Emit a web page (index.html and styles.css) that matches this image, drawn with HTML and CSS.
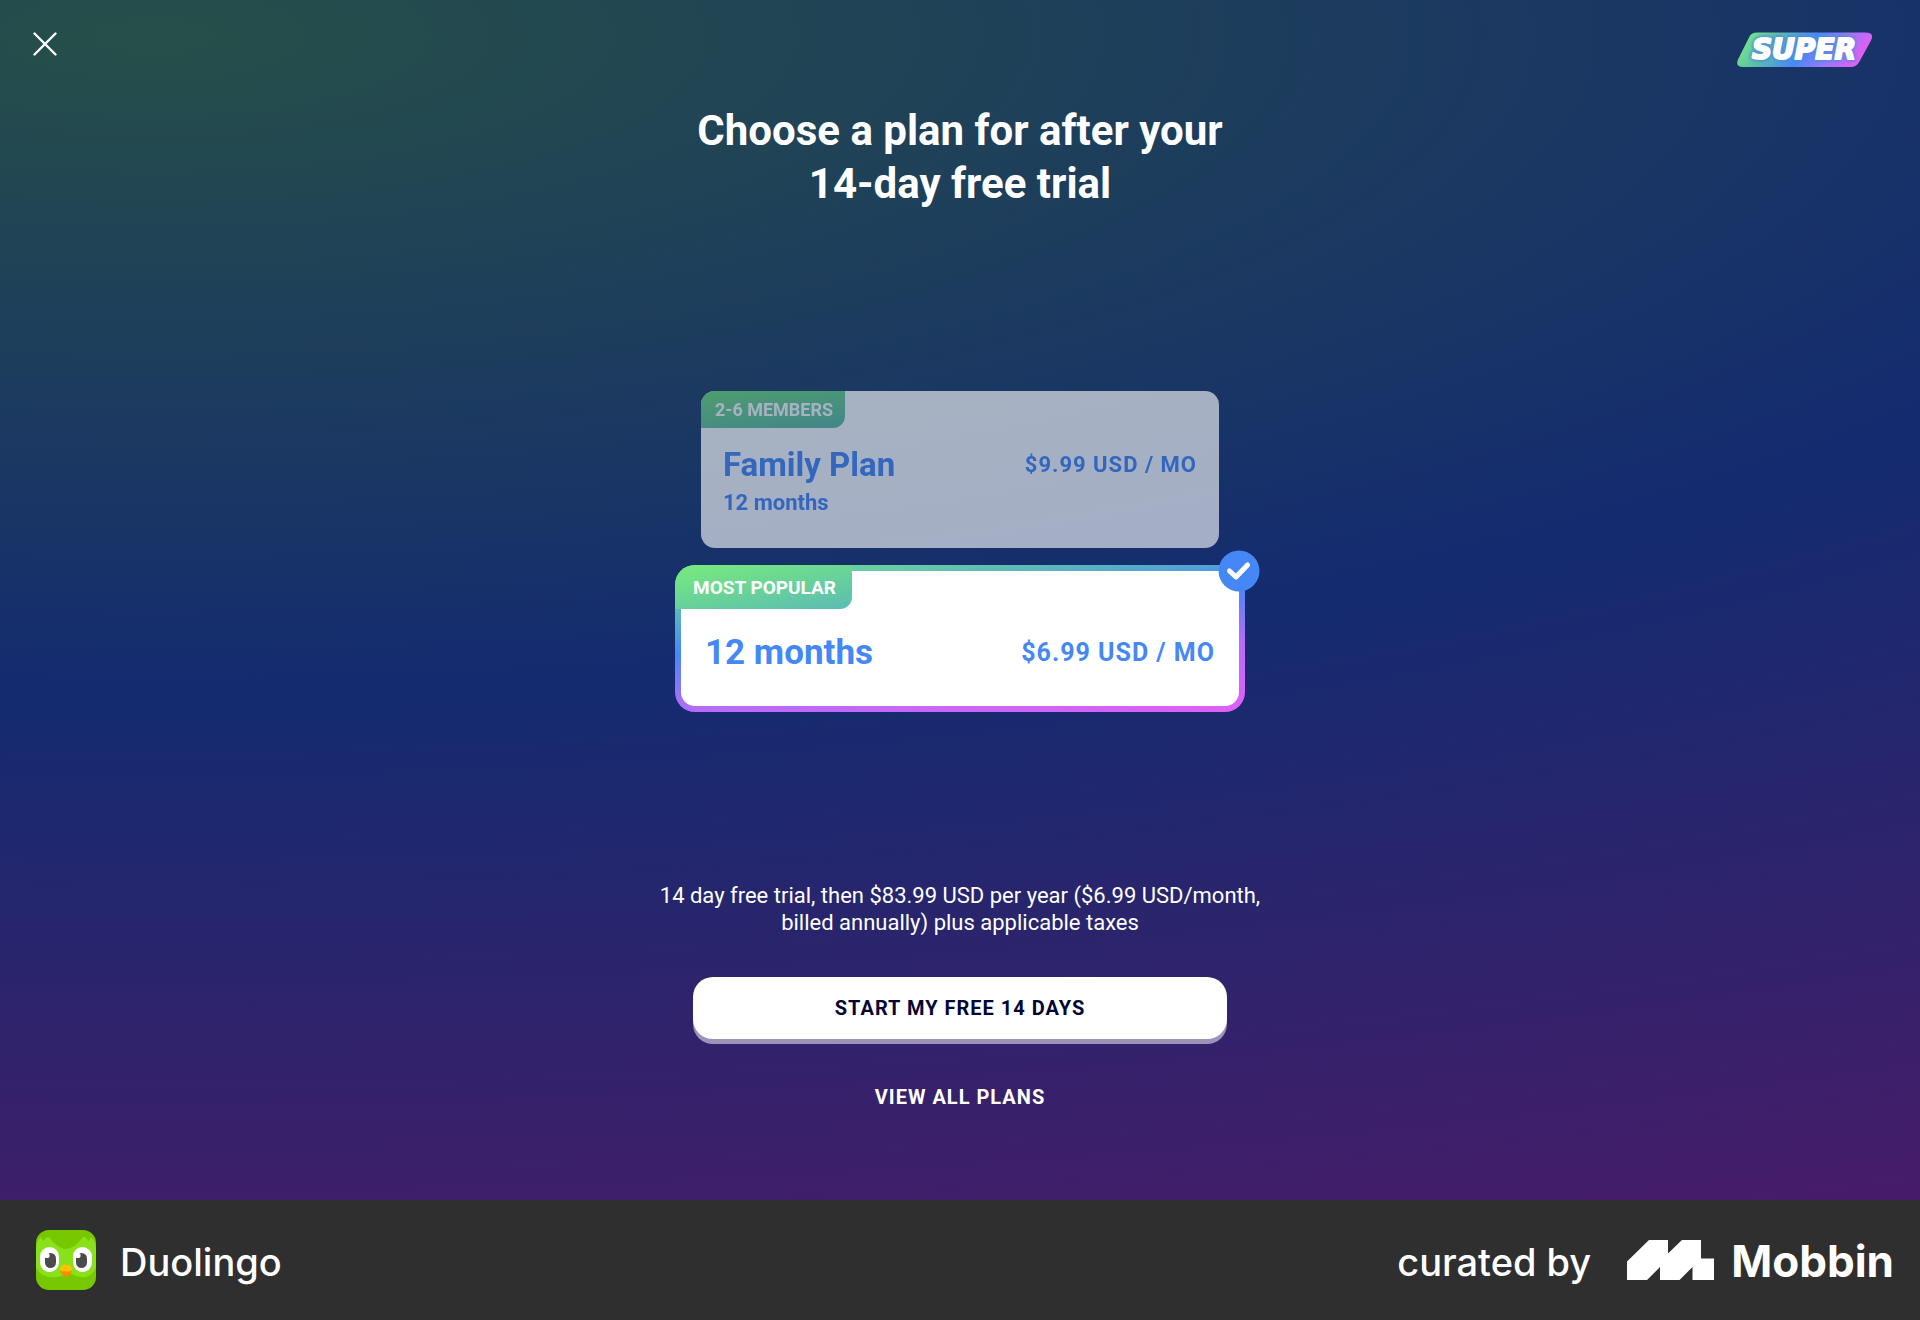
FILE: index.html
```html
<!DOCTYPE html>
<html lang="en">
<head>
<meta charset="utf-8">
<meta name="viewport" content="width=device-width, initial-scale=1">
<title>Super Duolingo – Choose a plan</title>
<link rel="stylesheet" href="styles.css">
</head>
<body>
<form class="screen">
  <header class="topbar">
    <button class="close" type="button" aria-label="Close">
      <svg width="24" height="24" viewBox="0 0 24 24" fill="none" stroke="#fff" stroke-width="2.4" stroke-linecap="round"><path d="M1.5 1.5l21 21M22.500 1.500l-21 21"/></svg>
    </button>
    <svg class="super" width="136" height="36" viewBox="0 0 136 36" role="img" aria-label="Super">
      <defs>
        <linearGradient id="superFill" x1="0" y1="0.4" x2="1" y2="0.6">
          <stop offset="0.05" stop-color="#70dd90"/>
          <stop offset="0.2" stop-color="#60c4a0"/>
          <stop offset="0.5" stop-color="#4788f8"/>
          <stop offset="0.72" stop-color="#9a78fa"/>
          <stop offset="0.92" stop-color="#dd60f5"/>
        </linearGradient>
        <filter id="superGlow" x="-10%" y="-30%" width="120%" height="160%"><feGaussianBlur stdDeviation="1.200"/></filter>
      </defs>
      <path fill="url(#superFill)" d="M20 0.500h108q10 0 6 8l-11.500 21q-3 5.500-9 5.500H6q-8 0-5-7.500L12.500 4.500Q14.500 0.500 20 0.500z"/>
      <text class="super-halo" x="67" y="27" text-anchor="middle" filter="url(#superGlow)" aria-hidden="true">SUPER</text>
      <text class="super-word" x="67" y="27" text-anchor="middle">SUPER</text>
    </svg>
  </header>

  <h1 class="title">Choose a plan for after your<br>14-day free trial</h1>

  <div class="plans" role="radiogroup" aria-label="Plans">
    <label class="plan plan-family">
      <input class="plan-radio" type="radio" name="plan" value="family">
      <span class="tag">2-6 MEMBERS</span>
      <span class="plan-row">
        <span class="plan-name">Family Plan</span>
        <span class="plan-price">$9.99 USD / MO</span>
      </span>
      <span class="plan-term">12 months</span>
    </label>
    <label class="plan plan-single">
      <input class="plan-radio" type="radio" name="plan" value="single" checked>
      <span class="tag">MOST POPULAR</span>
      <span class="plan-row">
        <span class="plan-name">12 months</span>
        <span class="plan-price">$6.99 USD / MO</span>
      </span>
      <svg class="check" width="42" height="42" viewBox="0 0 42 42" aria-hidden="true"><circle cx="21" cy="21" r="20.500" fill="#4588f5"/><path d="M11.500 21l6.500 6 11.500-12" fill="none" stroke="#fff" stroke-width="5" stroke-linecap="round" stroke-linejoin="round"/></svg>
    </label>
  </div>

  <div class="actions">
    <p class="terms">14 day free trial, then $83.99 USD per year ($6.99 USD/month,<br>billed annually) plus applicable taxes</p>
    <button class="start" type="submit">START MY FREE 14 DAYS</button>
    <button class="view-all" type="button">VIEW ALL PLANS</button>
  </div>
</form>

<footer class="credit">
  <div class="app">
    <svg width="60" height="60" viewBox="0 0 60 60" aria-hidden="true">
      <rect width="60" height="60" rx="13" fill="#78c800"/>
      <path fill="#89e219" d="M0 21Q0 13 3 9q1-3 3 0l1 2 3-3q2-2 4 0 8 9 16 11 8-2 16-11 2-2 4 0l3 3 1-2q2-3 3 0 3 4 3 12v16q-5 12-15 10-6-1-12-4-6 3-12 4Q5 49 0 37z"/>
      <path fill="#78c800" d="M14 8q7 10 16 11 9-1 16-11z"/>
      <rect x="4" y="17" width="19" height="25" rx="9.500" fill="#fff"/>
      <rect x="37" y="17" width="19" height="25" rx="9.500" fill="#fff"/>
      <rect x="9" y="23" width="11" height="15" rx="5.500" fill="#4b4b4b"/>
      <rect x="40" y="23" width="11" height="15" rx="5.500" fill="#4b4b4b"/>
      <circle cx="11" cy="25.500" r="2.600" fill="#fff"/>
      <circle cx="42" cy="25.500" r="2.600" fill="#fff"/>
      <path fill="#f49000" d="M24.500 39h11v2.500q-1 5-5.500 5t-5.500-5z"/>
      <path fill="#ffc200" d="M23.500 39.500q2-5 6.500-5t6.500 5q-3 3-6.500 1.500-3.500 1.500-6.500-1.500z"/>
    </svg>
    <span class="app-name">Duolingo</span>
  </div>
  <div class="curator">
    <span class="app-name">curated by</span>
    <svg class="mobbin-mark" width="88" height="40" viewBox="0 0 88 40" aria-hidden="true"><path fill="#fff" d="M22 0h19v13.500L55 0h19v18.500h13V40H65.500V27L52.500 40H33V27L20 40H0V21.500z"/></svg>
    <span class="mobbin-name">Mobbin</span>
  </div>
</footer>
</body>
</html>
```
FILE: styles.css
```css
* {
  box-sizing: border-box;
}

body {
  margin: 0;
  min-height: 100vh;
  display: flex;
  flex-direction: column;
  font-family: Roboto, "Liberation Sans", sans-serif;
  color: #fff;
  background: #2f2f2f;
}

button {
  border: 0;
  padding: 0;
  background: none;
  color: inherit;
  font: inherit;
  cursor: pointer;
}

.screen {
  flex: 1;
  display: flex;
  flex-direction: column;
  align-items: center;
  background: radial-gradient(ellipse 230% 110% at 8% 3%, #264f49 0%, #142b70 50%, #4a1b68 100%);
}

.topbar {
  align-self: stretch;
  display: flex;
  justify-content: space-between;
  align-items: flex-start;
  height: 104px;
  padding: 32px 47px 0 33px;
}

.close,
.close svg,
.super {
  display: block;
}

.super-word,
.super-halo {
  font: italic 700 28px "DejaVu Sans", sans-serif;
  fill: #fff;
  stroke: #fff;
  stroke-width: 2;
  stroke-linejoin: round;
}

.super-halo {
  stroke: #4c8de0;
  stroke-width: 6;
  opacity: 0.7;
}

.title {
  margin: 0;
  font-size: 42px;
  font-weight: 700;
  line-height: 53px;
  text-align: center;
}

.plans {
  flex: 1;
  display: flex;
  flex-direction: column;
  align-items: center;
  justify-content: center;
  gap: 17px;
  width: 100%;
  padding: 10px 16px 0;
}

.plan {
  position: relative;
  display: flex;
  flex-direction: column;
  width: 100%;
  color: #4588f5;
  font-weight: 700;
  cursor: pointer;
}

.plan-radio {
  position: absolute;
  opacity: 0;
}

.tag {
  align-self: flex-start;
  color: #fff;
}

.plan-row {
  display: flex;
  justify-content: space-between;
  align-items: center;
}

.plan-price {
  letter-spacing: 1px;
}

.plan-family {
  max-width: 518px;
  height: 157px;
  border-radius: 14px;
  background: #fff;
  opacity: 0.61;
  overflow: hidden;
}

.plan-family .tag {
  padding: 0 12px 0 14px;
  border-bottom-right-radius: 12px;
  background: linear-gradient(172deg, #70dc78, #5db8a4);
  font-size: 18px;
  line-height: 37px;
}

.plan-family .plan-row {
  padding: 17px 22px 0;
}

.plan-family .plan-name {
  font-size: 33px;
  line-height: 40px;
}

.plan-family .plan-price {
  font-size: 22px;
}

.plan-term {
  padding: 3px 22px 0;
  font-size: 22px;
  line-height: 30px;
}

.plan-single {
  max-width: 570px;
  height: 147px;
  border: 6px solid transparent;
  border-radius: 20px;
  background:
    linear-gradient(#fff, #fff) padding-box,
    linear-gradient(173deg, #78eb7b 0%, #4588f5 41%, #b76cf8 68%, #e060f5 100%) border-box;
}

.plan-single .tag {
  margin: -6px 0 0 -6px;
  padding: 2px 16px 0 18px;
  border-radius: 20px 0 12px 0;
  background: linear-gradient(169deg, #78eb7b, #5bbcb4);
  font-size: 19px;
  line-height: 42px;
}

.plan-single .plan-row {
  padding: 22px 24px 0;
}

.plan-single .plan-name {
  font-size: 35px;
  line-height: 44px;
}

.plan-single .plan-price {
  font-size: 25px;
}

/* Sits over the corner of the chosen plan */
.check {
  position: absolute;
  top: -21px;
  right: -21px;
}

.actions {
  display: flex;
  flex-direction: column;
  align-items: center;
  width: 100%;
  padding: 0 16px 83px;
}

.terms {
  margin: 0 0 41px;
  font-size: 22px;
  line-height: 27px;
  text-align: center;
}

.start {
  width: 100%;
  max-width: 534px;
  height: 62px;
  border-radius: 20px;
  background: #fff;
  box-shadow: 0 5px 0 #9d92b7;
  color: #040435;
  font-size: 20px;
  font-weight: 700;
  letter-spacing: 1px;
}

.view-all {
  margin-top: 38px;
  font-size: 20px;
  font-weight: 700;
  line-height: 40px;
  letter-spacing: 1px;
}

.credit {
  display: flex;
  justify-content: space-between;
  align-items: center;
  flex-wrap: wrap;
  min-height: 120px;
  padding: 0 26px 0 36px;
  background: #2f2f2f;
  font-family: Inter, "Liberation Sans", sans-serif;
}

.app,
.curator {
  display: flex;
  align-items: center;
}

.app {
  gap: 24px;
}

.app-name,
.mobbin-name {
  padding-top: 4px;
  font-size: 38px;
  font-weight: 500;
  line-height: 48px;
}

.mobbin-mark {
  margin: 0 16px 0 36px;
}

.mobbin-name {
  padding-top: 2px;
  font-size: 44px;
  font-weight: 700;
}
```
